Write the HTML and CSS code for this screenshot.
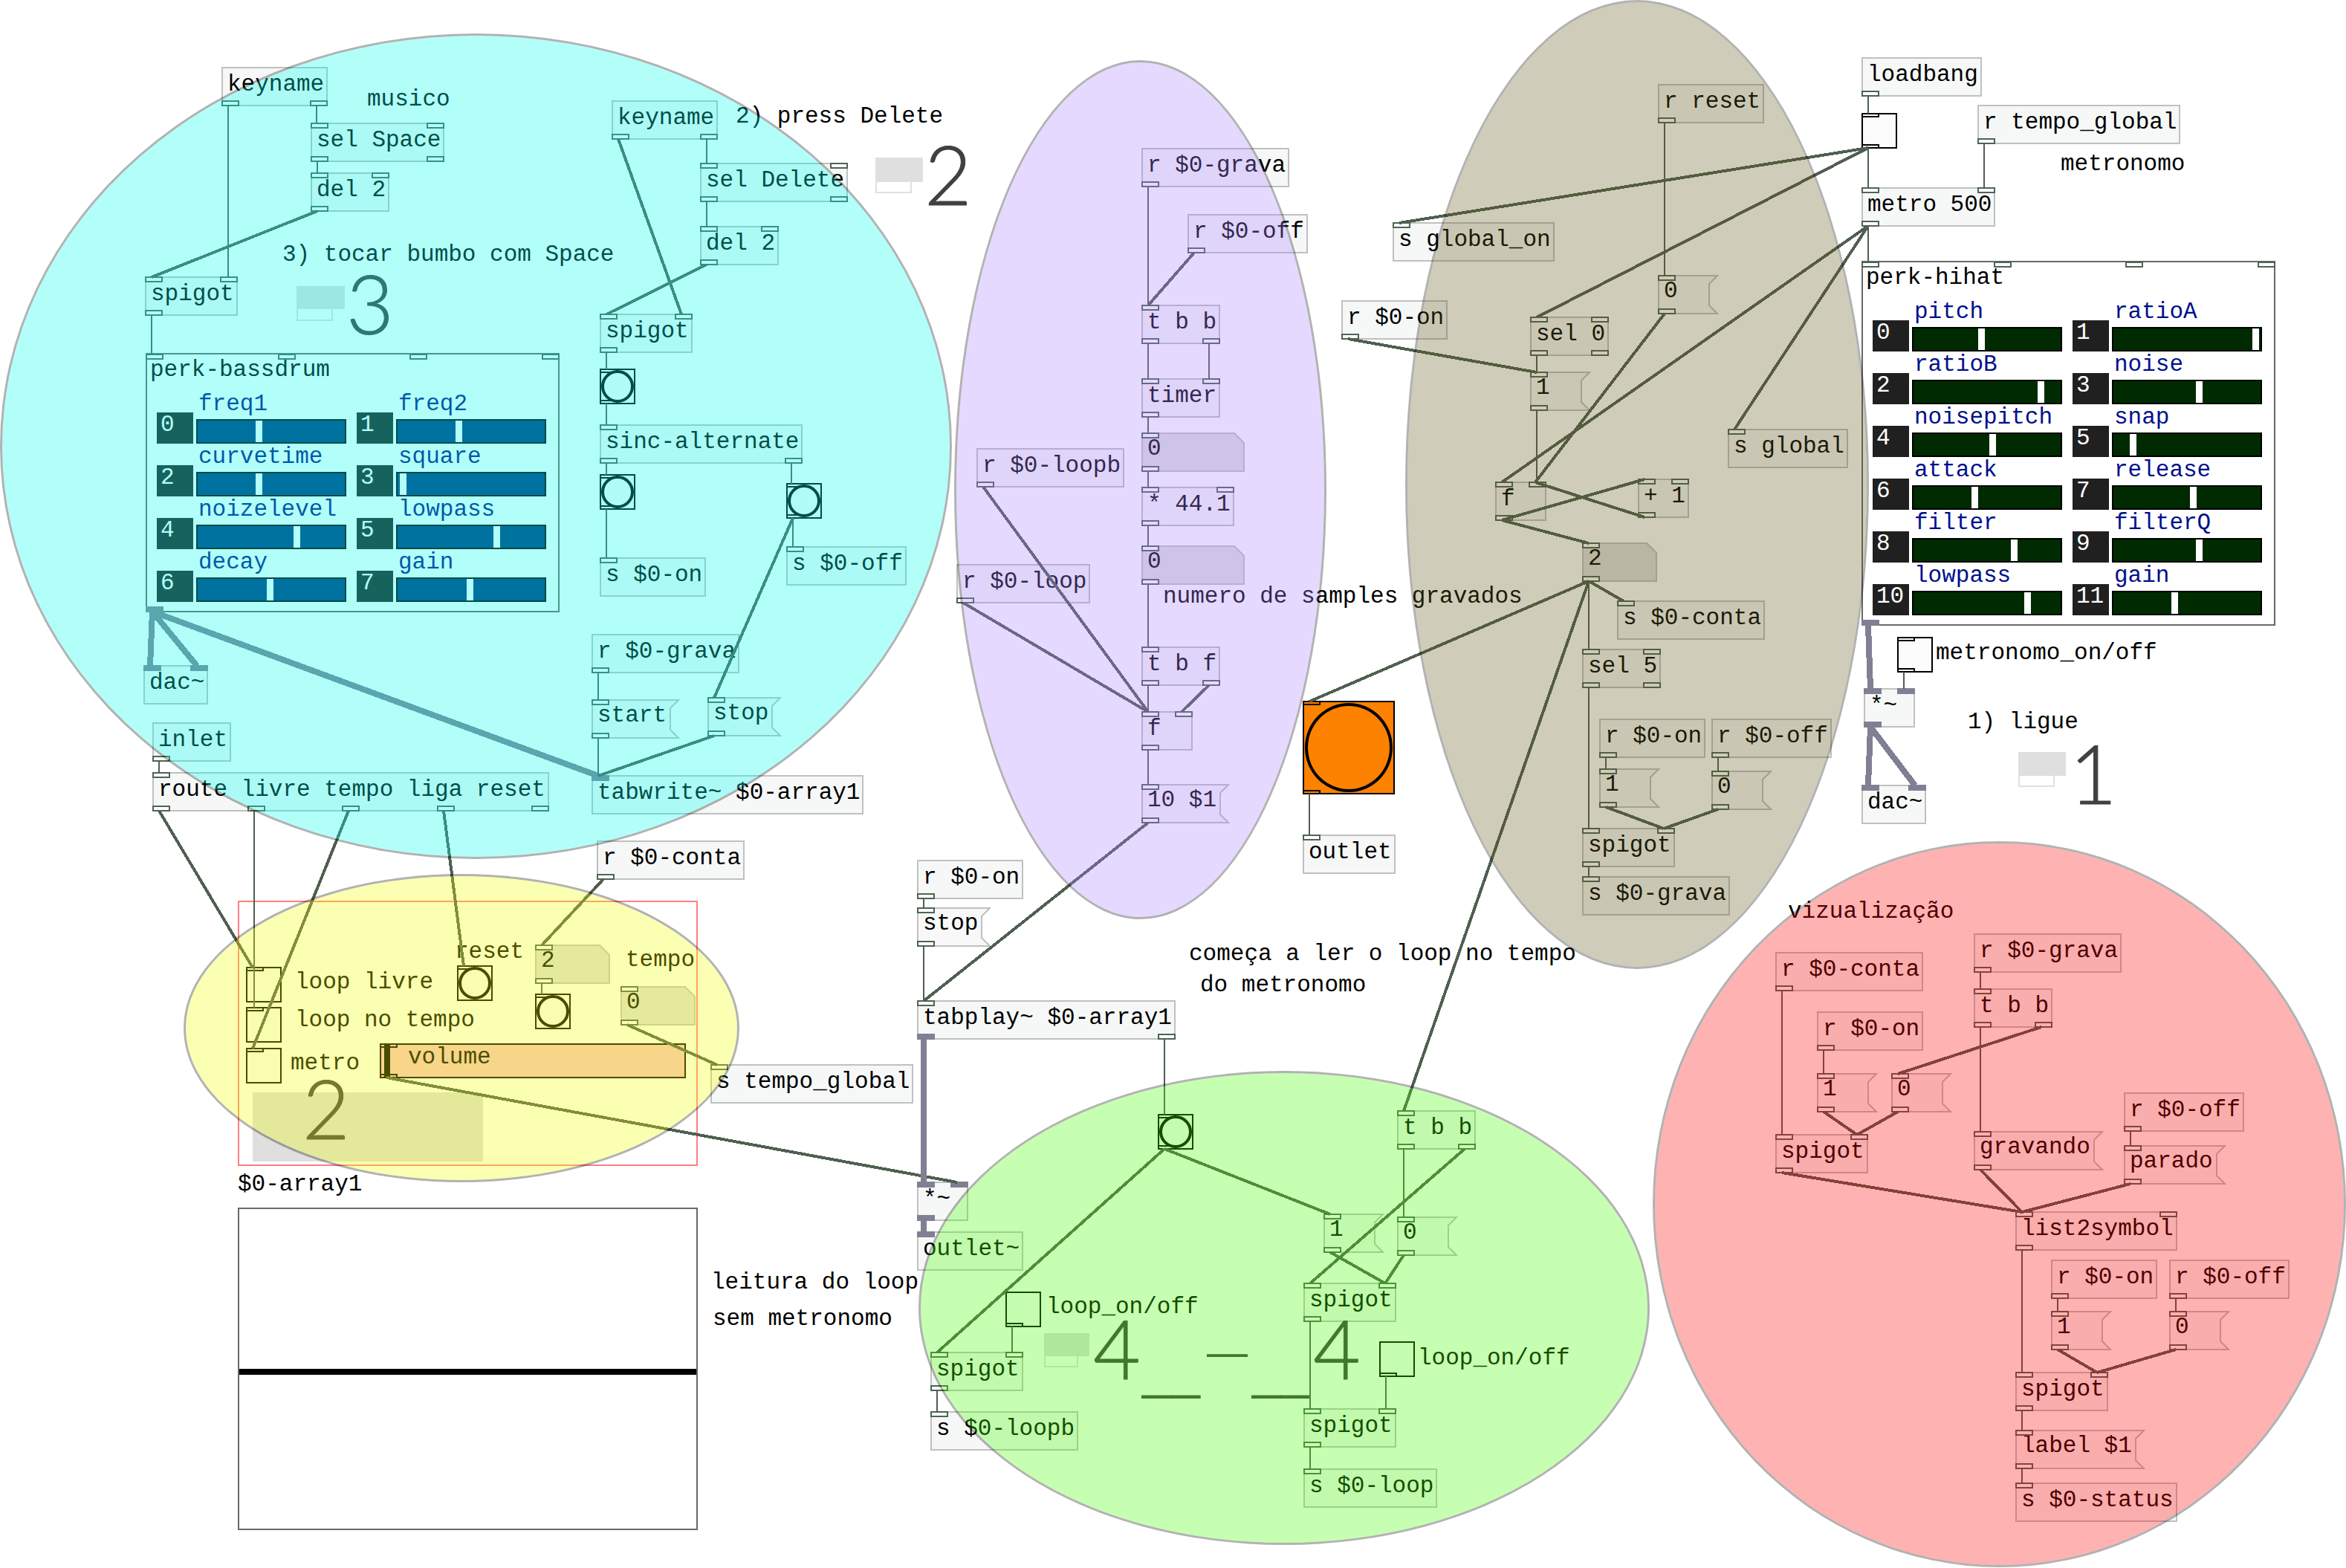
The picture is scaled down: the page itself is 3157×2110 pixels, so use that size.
FILE: index.html
```html
<!DOCTYPE html>
<html lang="pt">
<head>
<meta charset="utf-8">
<title>looper patch</title>
<link rel="stylesheet" href="styles.css">
</head>
<body>
<main class="patch" id="patch">
  <div class="nodes" id="nodes"></div>
  <svg class="wires" id="wires" aria-hidden="true"></svg>
  <div class="zones" id="zones"></div>
</main>
<script src="patch.js"></script>
</body>
</html>
```
FILE: styles.css
```css
* { box-sizing: border-box; }

body {
  margin: 0;
  background: #fff;
  color: #000;
  font-family: "Liberation Mono", monospace;
  font-size: 31px;
  line-height: 35px;
}

button, input { font: inherit; color: inherit; margin: 0; border-radius: 0; }

.patch { position: relative; min-height: 100vh; }
.wires, .zones { position: absolute; inset: 0; width: 100%; height: 100%; pointer-events: none; }

/* boxes on the free canvas */
.node { position: absolute; white-space: nowrap; }
.note { padding-top: 2px; }
.object { height: 53px; padding: 4px 0 0 6px; border: 2px solid #c0c0c0; background: #f6f8f8; }
.object .port.in { top: -2px; }
.object .port { margin-left: -2px; }
.object .port.out { bottom: -2px; }

.message, .number { height: 53px; }
.shape { position: absolute; inset: 0; width: 100%; height: 100%; fill: #f8f8f8; stroke: #c0c0c0; stroke-width: 2; }
.number .shape { fill: #e0e0e0; }
.message-text {
  position: relative;
  display: block;
  width: 100%;
  height: 100%;
  padding: 4px 0 14px 8px;
  border: 0;
  background: none;
  text-align: left;
}
.number-value {
  position: relative;
  display: block;
  width: 100%;
  height: 43px;
  padding: 4px 0 4px 8px;
  border: 0;
  background: none;
}

/* inlets and outlets */
.port { position: absolute; width: 24px; height: 8px; border: 2px solid #4d6452; background: #fff; }
.port.in { top: 0; }
.port.out { bottom: 0; }
.port.signal { background: #808094; border-color: #808094; }
.control .port { height: 6px; border-color: #000; background: none; pointer-events: none; }

.wire { fill: none; stroke: #4f5f50; stroke-width: 4; shape-rendering: crispEdges; }
.wire.straight { stroke-width: 2; }
.wire.audio { stroke: #808094; stroke-width: 8; }

/* bang and toggle */
.control { width: 48px; height: 48px; }
.bang { display: flex; width: 100%; height: 100%; padding: 0; border: 2px solid #000; background: #fcfcfc; }
.bang::after { content: ""; flex: 1; border: 4px solid #000; border-radius: 50%; }
.control.big { width: 124px; height: 126px; }
.big .bang { padding: 1px; background: #fc8200; }
.toggle { display: block; appearance: none; width: 100%; height: 100%; border: 2px solid #000; background: #fcfcfc; }

/* abstractions with a grid of sliders */
.panel { width: 557px; border: 2px solid #686868; background: #fff; }
.panel .port { margin-left: -2px; }
.panel .port.in { top: -1px; }
.panel .port.out { bottom: -2px; }
.panel-title { margin: 0; padding: 3px 0 0 4px; font-size: inherit; font-weight: normal; height: 49px; }
.params { display: grid; grid-template-columns: repeat(2, 255px); column-gap: 14px; padding: 0 0 12px 13px; }
.param { display: grid; grid-template: 38px 33px / 49px 202px; column-gap: 4px; }
.param-label { grid-area: 1 / 2; padding-left: 3px; color: #00108c; }
.badge { grid-area: 1 / 1 / 3 / 2; align-self: end; height: 42px; padding-left: 5px; background: #202020; color: #fff; line-height: 33px; }
.slider { grid-area: 2 / 2; appearance: none; width: 100%; height: 33px; border: 2px solid #000; background: #002b00; }
.bassdrum .slider { background: #00367e; }
.slider::-webkit-slider-thumb { appearance: none; width: 9px; height: 29px; border: 0; background: #fff; }

.volume { width: 412px; height: 47px; }
.volume .slider { display: block; height: 47px; background: #fac3c5; }
.volume .slider::-webkit-slider-thumb { width: 8px; height: 43px; background: #000; }
.volume-label { position: absolute; left: 38px; top: 1px; }
.volume .port { height: 6px; border-color: #000; background: none; }

/* canvases, frames and the sample array */
.fill { background: #dfdfdf; }
.outline { border: 2px solid #e0e0e0; background: #fff; }
.frame { border: 2px solid #ff8080; }
.array { display: flex; align-items: center; padding-top: 8px; border: 2px solid #686868; background: #fff; }
.array::after { content: ""; flex: 1; height: 8px; background: #000; }

.step { font-family: Lato, sans-serif; font-weight: 300; font-size: 110px; line-height: 110px; color: #404040; -webkit-text-stroke: 1px #404040; }
.rule { font-family: "Liberation Sans", sans-serif; line-height: 80px; color: #404040; }
.rule.low { font-size: 70px; }
.rule.dash { font-size: 55px; }

/* tinted areas that group the patch */
.zone { position: absolute; border: 3px solid rgba(0, 0, 0, .3); border-radius: 50%; background-clip: padding-box; }
.cyan { background-color: rgba(0, 255, 240, .3); }
.violet { background-color: rgba(168, 128, 255, .3); }
.olive { background-color: rgba(95, 85, 22, .3); }
.yellow { background-color: rgba(242, 255, 0, .3); }
.green { background-color: rgba(68, 255, 0, .3); }
.red { background-color: rgba(255, 0, 0, .3); }
```
FILE: patch.js
```js
// kind, x, y, text, inlets, outlets (m = message, s = signal), name
const nodes = [
  ["object", 298, 90, "keyname", "", "mm", "key1"],
  ["object", 418, 165, "sel Space", "mm", "mm", "selSpace"],
  ["object", 418, 232, "del 2", "mm", "m", "del1"],
  ["object", 195, 372, "spigot", "mm", "m", "spigot1"],
  ["object", 193, 895, "dac~", "ss", "", "dac1"],
  ["object", 205, 972, "inlet", "", "m", "inlet"],
  ["object", 205, 1039, "route livre tempo liga reset", "m", "mmmmm", "route"],
  ["object", 796, 853, "r $0-grava", "", "m", "rGrava1"],
  ["message", 796, 941, "start", "m", "m", "start"],
  ["message", 952, 938, "stop", "m", "m", "stop1"],
  ["object", 796, 1043, "tabwrite~ $0-array1", "s", "", "tabwrite"],
  ["object", 803, 1131, "r $0-conta", "", "m", "rConta1"],
  ["object", 823, 135, "keyname", "", "mm", "key2"],
  ["object", 942, 219, "sel Delete", "mm", "mm", "selDelete"],
  ["object", 942, 304, "del 2", "mm", "m", "del2"],
  ["object", 807, 422, "spigot", "mm", "m", "spigot2"],
  ["bang", 807, 496, "", "m", "m", "bang1"],
  ["object", 807, 571, "sinc-alternate", "m", "mm", "sinc"],
  ["bang", 807, 638, "", "m", "m", "bang2"],
  ["bang", 1058, 650, "", "m", "m", "bang3"],
  ["object", 807, 750, "s $0-on", "m", "", "sOn"],
  ["object", 1058, 735, "s $0-off", "m", "", "sOff"],

  ["object", 1536, 199, "r $0-grava", "", "m", "rGrava2"],
  ["object", 1598, 288, "r $0-off", "", "m", "rOff1"],
  ["object", 1536, 410, "t b b", "m", "mm", "tbb1"],
  ["object", 1536, 509, "timer", "mm", "m", "timer"],
  ["number", 1536, 582, "0", "m", "m", "num1", 139],
  ["object", 1536, 655, "* 44.1", "mm", "m", "mul"],
  ["number", 1536, 734, "0", "m", "m", "num2", 139],
  ["object", 1536, 870, "t b f", "m", "mm", "tbf"],
  ["object", 1536, 957, "f", "mm", "m", "f1"],
  ["message", 1536, 1055, "10 $1", "m", "m", "ten"],
  ["object", 1314, 603, "r $0-loopb", "", "m", "rLoopb"],
  ["object", 1287, 759, "r $0-loop", "", "m", "rLoop"],
  ["bang", 1753, 943, "", "m", "m", "bigBang", "big"],
  ["object", 1753, 1123, "outlet", "m", "", "outlet"],

  ["object", 2231, 113, "r reset", "", "m", "rReset"],
  ["object", 1874, 299, "s global_on", "m", "", "sGlobalOn"],
  ["object", 1805, 404, "r $0-on", "", "m", "rOn1"],
  ["message", 2231, 370, "0", "m", "m", "zero1"],
  ["object", 2059, 426, "sel 0", "mm", "mm", "sel0"],
  ["message", 2059, 500, "1", "m", "m", "one1"],
  ["object", 2012, 648, "f", "mm", "m", "f2"],
  ["object", 2204, 644, "+ 1", "mm", "m", "plus"],
  ["object", 2325, 577, "s global", "m", "", "sGlobal"],
  ["number", 2129, 730, "2", "m", "m", "num3", 101],
  ["object", 2176, 808, "s $0-conta", "m", "", "sConta"],
  ["object", 2129, 873, "sel 5", "mm", "mm", "sel5"],
  ["object", 2152, 967, "r $0-on", "", "m", "rOn2"],
  ["object", 2303, 967, "r $0-off", "", "m", "rOff2"],
  ["message", 2152, 1034, "1", "m", "m", "one2"],
  ["message", 2303, 1037, "0", "m", "m", "zero2"],
  ["object", 2129, 1114, "spigot", "mm", "m", "spigot3"],
  ["object", 2129, 1179, "s $0-grava", "m", "", "sGrava"],

  ["object", 2505, 77, "loadbang", "", "m", "loadbang"],
  ["toggle", 2505, 152, "", "m", "m", "toggleMain"],
  ["object", 2661, 141, "r tempo_global", "", "m", "rTempo"],
  ["object", 2505, 252, "metro 500", "mm", "m", "metro"],
  ["toggle", 2553, 857, "", "m", "m", "metronomeOn"],
  ["object", 2508, 926, "*~", "ss", "s", "gain1"],
  ["object", 2505, 1056, "dac~", "ss", "", "dac2"],

  ["toggle", 331, 1301, "", "m", "", "loopLivre"],
  ["toggle", 331, 1355, "", "m", "", "loopTempo"],
  ["toggle", 331, 1410, "", "m", "", "metroOn"],
  ["bang", 615, 1299, "", "m", "", "resetBang"],
  ["number", 720, 1271, "2", "m", "m", "num4", 101],
  ["bang", 720, 1337, "", "m", "", "countBang"],
  ["number", 835, 1327, "0", "m", "m", "tempo", 101],
  ["object", 956, 1432, "s tempo_global", "m", "", "sTempo"],

  ["object", 1234, 1157, "r $0-on", "", "m", "rOn3"],
  ["message", 1234, 1221, "stop", "m", "m", "stop2"],
  ["object", 1234, 1346, "tabplay~ $0-array1", "m", "sm", "tabplay"],
  ["bang", 1558, 1499, "", "m", "m", "bang4"],
  ["object", 1880, 1494, "t b b", "m", "mm", "tbb2"],
  ["object", 1234, 1590, "*~", "ss", "s", "gain2"],
  ["object", 1234, 1657, "outlet~", "s", "", "outletSig"],
  ["message", 1781, 1633, "1", "m", "m", "one3"],
  ["message", 1880, 1637, "0", "m", "m", "zero3"],
  ["toggle", 1353, 1738, "", "", "m", "loopOn1"],
  ["object", 1252, 1819, "spigot", "mm", "m", "spigot4"],
  ["object", 1252, 1899, "s $0-loopb", "m", "", "sLoopb"],
  ["object", 1754, 1726, "spigot", "mm", "m", "spigot5"],
  ["toggle", 1856, 1805, "", "", "m", "loopOn2"],
  ["object", 1754, 1895, "spigot", "mm", "m", "spigot6"],
  ["object", 1754, 1976, "s $0-loop", "m", "", "sLoop"],

  ["object", 2656, 1256, "r $0-grava", "", "m", "rGrava3"],
  ["object", 2389, 1281, "r $0-conta", "", "m", "rConta2"],
  ["object", 2445, 1361, "r $0-on", "", "m", "rOn4"],
  ["object", 2656, 1330, "t b b", "m", "mm", "tbb3"],
  ["message", 2445, 1444, "1", "m", "m", "one4"],
  ["message", 2545, 1444, "0", "m", "m", "zero4"],
  ["object", 2389, 1526, "spigot", "mm", "m", "spigot7"],
  ["message", 2656, 1522, "gravando", "m", "m", "gravando"],
  ["object", 2858, 1470, "r $0-off", "", "m", "rOff3"],
  ["message", 2858, 1541, "parado", "m", "m", "parado"],
  ["object", 2712, 1630, "list2symbol", "mm", "m", "l2s"],
  ["object", 2760, 1695, "r $0-on", "", "m", "rOn5"],
  ["object", 2919, 1695, "r $0-off", "", "m", "rOff4"],
  ["message", 2760, 1764, "1", "m", "m", "one5"],
  ["message", 2919, 1764, "0", "m", "m", "zero5"],
  ["object", 2712, 1846, "spigot", "mm", "m", "spigot8"],
  ["message", 2712, 1924, "label $1", "m", "m", "label"],
  ["object", 2712, 1995, "s $0-status", "m", "", "sStatus"],
];

// x, y, text, name of the control it labels
const comments = [
  [494, 114, "musico"],
  [380, 323, "3) tocar bumbo com Space"],
  [990, 137, "2) press Delete"],
  [1565, 783, "numero de samples gravados"],
  [2773, 201, "metronomo"],
  [2605, 859, "metronomo_on/off", "metronomeOn"],
  [2648, 952, "1) ligue"],
  [2406, 1207, "vizualização"],
  [1600, 1264, "começa a ler o loop no tempo"],
  [1615, 1306, "do metronomo"],
  [957, 1706, "leitura do loop"],
  [959, 1755, "sem metronomo"],
  [1408, 1739, "loop_on/off", "loopOn1"],
  [1908, 1808, "loop_on/off", "loopOn2"],
  [397, 1302, "loop livre", "loopLivre"],
  [397, 1353, "loop no tempo", "loopTempo"],
  [391, 1411, "metro", "metroOn"],
  [612, 1261, "reset"],
  [842, 1272, "tempo", "tempo"],
  [320, 1574, "$0-array1"],
];

// class, x, y, width, height
const plates = [
  ["outline", 399, 385, 49, 47], ["fill", 399, 385, 65, 31],
  ["outline", 1178, 212, 49, 48], ["fill", 1178, 212, 64, 33],
  ["outline", 2716, 1012, 49, 47], ["fill", 2716, 1012, 64, 32],
  ["outline", 1405, 1794, 46, 46], ["fill", 1405, 1794, 61, 31],
  ["fill", 340, 1470, 310, 93],
  ["frame", 320, 1212, 619, 357],
  ["array", 320, 1625, 619, 434],
];

// class, x, y, text
const figures = [
  ["step", 466, 352, "3"], ["step", 1244, 178, "2"], ["step", 2785, 984, "1"],
  ["step", 407, 1435, "2"], ["step", 1471, 1758, "4"], ["step", 1767, 1758, "4"],
  ["rule low", 1537, 1804, "__"], ["rule low", 1685, 1804, "__"], ["rule dash", 1624, 1779, "—"],
];

// name, class, x, y, [label, slider position]
const panels = [
  ["perk-bassdrum", "bassdrum", 196, 475, [["freq1", 78], ["freq2", 78], ["curvetime", 78], ["square", 3],
    ["noizelevel", 129], ["lowpass", 129], ["decay", 93], ["gain", 93]]],
  ["perk-hihat", "hihat", 2505, 351, [["pitch", 87], ["ratioA", 187], ["ratioB", 167], ["noise", 111],
    ["noisepitch", 102], ["snap", 22], ["attack", 78], ["release", 103], ["filter", 131], ["filterQ", 111],
    ["lowpass", 149], ["gain", 78]]],
];

// class, x, y, width, height
const zones = [
  ["cyan", 0, 45, 1281, 1111], ["violet", 1284, 81, 501, 1156], ["olive", 1891, 0, 624, 1304],
  ["yellow", 247, 1176, 748, 415], ["green", 1236, 1441, 984, 638], ["red", 2224, 1132, 933, 977],
];

// source:outlet > target:inlet
const wires = `key1:0>spigot1:1 key1:1>selSpace:0 selSpace:0>del1:0 del1:0>spigot1:0 spigot1:0>perk-bassdrum:0
perk-bassdrum:0>dac1:0 perk-bassdrum:0>dac1:1 perk-bassdrum:0>tabwrite:0 inlet:0>route:0
route:0>loopLivre:0 route:1>loopTempo:0 route:2>metroOn:0 route:3>resetBang:0
rGrava1:0>start:0 start:0>tabwrite:0 stop1:0>tabwrite:0 bang3:0>stop1:0 bang3:0>sOff:0
key2:0>spigot2:1 key2:1>selDelete:0 selDelete:0>del2:0 del2:0>spigot2:0 spigot2:0>bang1:0 bang1:0>sinc:0
sinc:0>bang2:0 sinc:1>bang3:0 bang2:0>sOn:0 rConta1:0>num4:0 num4:0>countBang:0 tempo:0>sTempo:0 volume:0>gain2:1
rGrava2:0>tbb1:0 rOff1:0>tbb1:0 tbb1:0>timer:0 tbb1:1>timer:1 timer:0>num1:0 num1:0>mul:0 mul:0>num2:0
num2:0>tbf:0 tbf:0>f1:0 tbf:1>f1:1 rLoopb:0>f1:0 rLoop:0>f1:0 f1:0>ten:0 ten:0>tabplay:0
bigBang:0>outlet:0 num3:0>bigBang:0 num3:0>tbb2:0 num3:0>sel5:0 num3:0>sConta:0
rReset:0>zero1:0 zero1:0>f2:1 toggleMain:0>sGlobalOn:0 toggleMain:0>sel0:0 toggleMain:0>metro:0
loadbang:0>toggleMain:0 rTempo:0>metro:1 metro:0>f2:0 metro:0>sGlobal:0 metro:0>perk-hihat:0
rOn1:0>one1:0 sel0:0>one1:0 one1:0>f2:1 f2:0>plus:0 plus:0>f2:1 f2:0>num3:0
sel5:0>spigot3:0 rOn2:0>one2:0 rOff2:0>zero2:0 one2:0>spigot3:1 zero2:0>spigot3:1 spigot3:0>sGrava:0
perk-hihat:0>gain1:0 metronomeOn:0>gain1:1 gain1:0>dac2:0 gain1:0>dac2:1
rOn3:0>stop2:0 stop2:0>tabplay:0 tabplay:0>gain2:0 tabplay:1>bang4:0 gain2:0>outletSig:0
bang4:0>spigot4:0 bang4:0>one3:0 tbb2:0>zero3:0 tbb2:1>spigot5:0 one3:0>spigot5:1 zero3:0>spigot5:1
loopOn1:0>spigot4:1 spigot4:0>sLoopb:0 spigot5:0>spigot6:0 loopOn2:0>spigot6:1 spigot6:0>sLoop:0
rGrava3:0>tbb3:0 rConta2:0>spigot7:0 rOn4:0>one4:0 tbb3:0>gravando:0 tbb3:1>zero4:0 one4:0>spigot7:1
zero4:0>spigot7:1 spigot7:0>l2s:0 gravando:0>l2s:0 rOff3:0>parado:0 parado:0>l2s:0 l2s:0>spigot8:0
rOn5:0>one5:0 rOff4:0>zero5:0 one5:0>spigot8:1 zero5:0>spigot8:1 spigot8:0>label:0 label:0>sStatus:0`.split(/\s+/);

const PORT = 24;
const CHAR = 18.6;
const placed = {};

const at = (x, y, w, h) =>
  `left:${x}px;top:${y}px` + (w ? `;width:${w}px` : "") + (h ? `;height:${h}px` : "");

const portX = (width, count, i) =>
  i === 0 ? 0 : Math.round((width - PORT) * i / (count - 1));

const ports = (side, kinds, width) => [...kinds].map((k, i) =>
  `<span class="port ${side}${k === "s" ? " signal" : ""}" style="left:${portX(width, kinds.length, i)}px"></span>`).join("");

function drawNode([kind, x, y, text, ins, outs, name, extra]) {
  let w = Math.round(Math.max(3, text.length) * CHAR) + 13;
  let h = 53;
  let body = text;
  let cls = kind;
  if (kind === "message") {
    w += 13;
    body = `<svg class="shape"><path d="M1 1H${w - 2}L${w - 13} 12V${h - 12}L${w - 2} ${h - 1}H1Z"/></svg>
      <button class="message-text">${text}</button>`;
  } else if (kind === "number") {
    w = extra;
    body = `<svg class="shape"><path d="M1 1H${w - 14}L${w - 1} 14V${h - 1}H1Z"/></svg>
      <input class="number-value" id="${name}" aria-label="${name}" value="${text}">`;
  } else if (kind === "bang" || kind === "toggle") {
    cls = "control" + (extra ? " " + extra : "");
    w = extra ? 124 : 48;
    h = extra ? 126 : 48;
    body = kind === "bang"
      ? `<button class="bang" aria-label="${name}"></button>`
      : `<input type="checkbox" class="toggle" id="${name}" aria-label="${name}">`;
  }
  placed[name] = { x, y, w, h, ins, outs };
  const width = cls.startsWith("control") ? 0 : w;
  return `<div class="node ${cls}" style="${at(x, y, width)}">${body}${ports("in", ins, w)}${ports("out", outs, w)}</div>`;
}

function drawPanel([name, cls, x, y, params]) {
  const w = 557;
  const h = params.length / 2 * 71 + 65;
  placed[name] = { x, y, w, h, ins: "mmmm", outs: "s" };
  const rows = params.map(([label, value], i) => `<div class="param">
    <label class="param-label" for="${cls}${i}">${label}</label><span class="badge">${i}</span>
    <input type="range" class="slider" id="${cls}${i}" min="0" max="189" value="${value}"></div>`).join("");
  return `<section class="node panel ${cls}" style="${at(x, y)}"><h2 class="panel-title">${name}</h2>
    <div class="params">${rows}</div>${ports("in", "mmmm", w)}${ports("out", "s", w)}</section>`;
}

function drawVolume() {
  placed.volume = { x: 511, y: 1404, w: 412, h: 47, ins: "m", outs: "m" };
  return `<div class="node volume" style="${at(511, 1404)}">
    <input type="range" class="slider" id="volume" min="0" max="100" value="1">
    <label class="volume-label" for="volume">volume</label>${ports("in", "m", 412)}${ports("out", "m", 412)}</div>`;
}

function drawWire(spec) {
  const [[from, outlet], [to, inlet]] = spec.split(">").map(s => s.split(":"));
  const a = placed[from];
  const b = placed[to];
  const x1 = a.x + portX(a.w, a.outs.length, +outlet) + 9;
  const x2 = b.x + portX(b.w, b.ins.length, +inlet) + 9;
  const audio = a.outs[outlet] === "s";
  const straight = Math.abs(x1 - x2) < 3;
  const end = straight && !audio ? x1 : x2;
  return `<path class="wire${straight ? " straight" : ""}${audio ? " audio" : ""}" d="M${x1} ${a.y + a.h - 1}L${end} ${b.y + 1}"/>`;
}

document.getElementById("nodes").innerHTML =
  plates.map(([c, x, y, w, h]) => `<div class="node ${c}" style="${at(x, y, w, h)}"></div>`).join("") +
  panels.map(drawPanel).join("") +
  nodes.map(drawNode).join("") +
  drawVolume() +
  comments.map(([x, y, t, target]) => target
    ? `<label class="node note" for="${target}" style="${at(x, y)}">${t}</label>`
    : `<span class="node note" style="${at(x, y)}">${t}</span>`).join("") +
  figures.map(([c, x, y, t]) => `<span class="node ${c}" style="${at(x, y)}">${t}</span>`).join("");

document.getElementById("wires").innerHTML = wires.map(drawWire).join("");

document.getElementById("zones").innerHTML =
  zones.map(([c, x, y, w, h]) => `<div class="zone ${c}" style="${at(x, y, w, h)}"></div>`).join("");
```
